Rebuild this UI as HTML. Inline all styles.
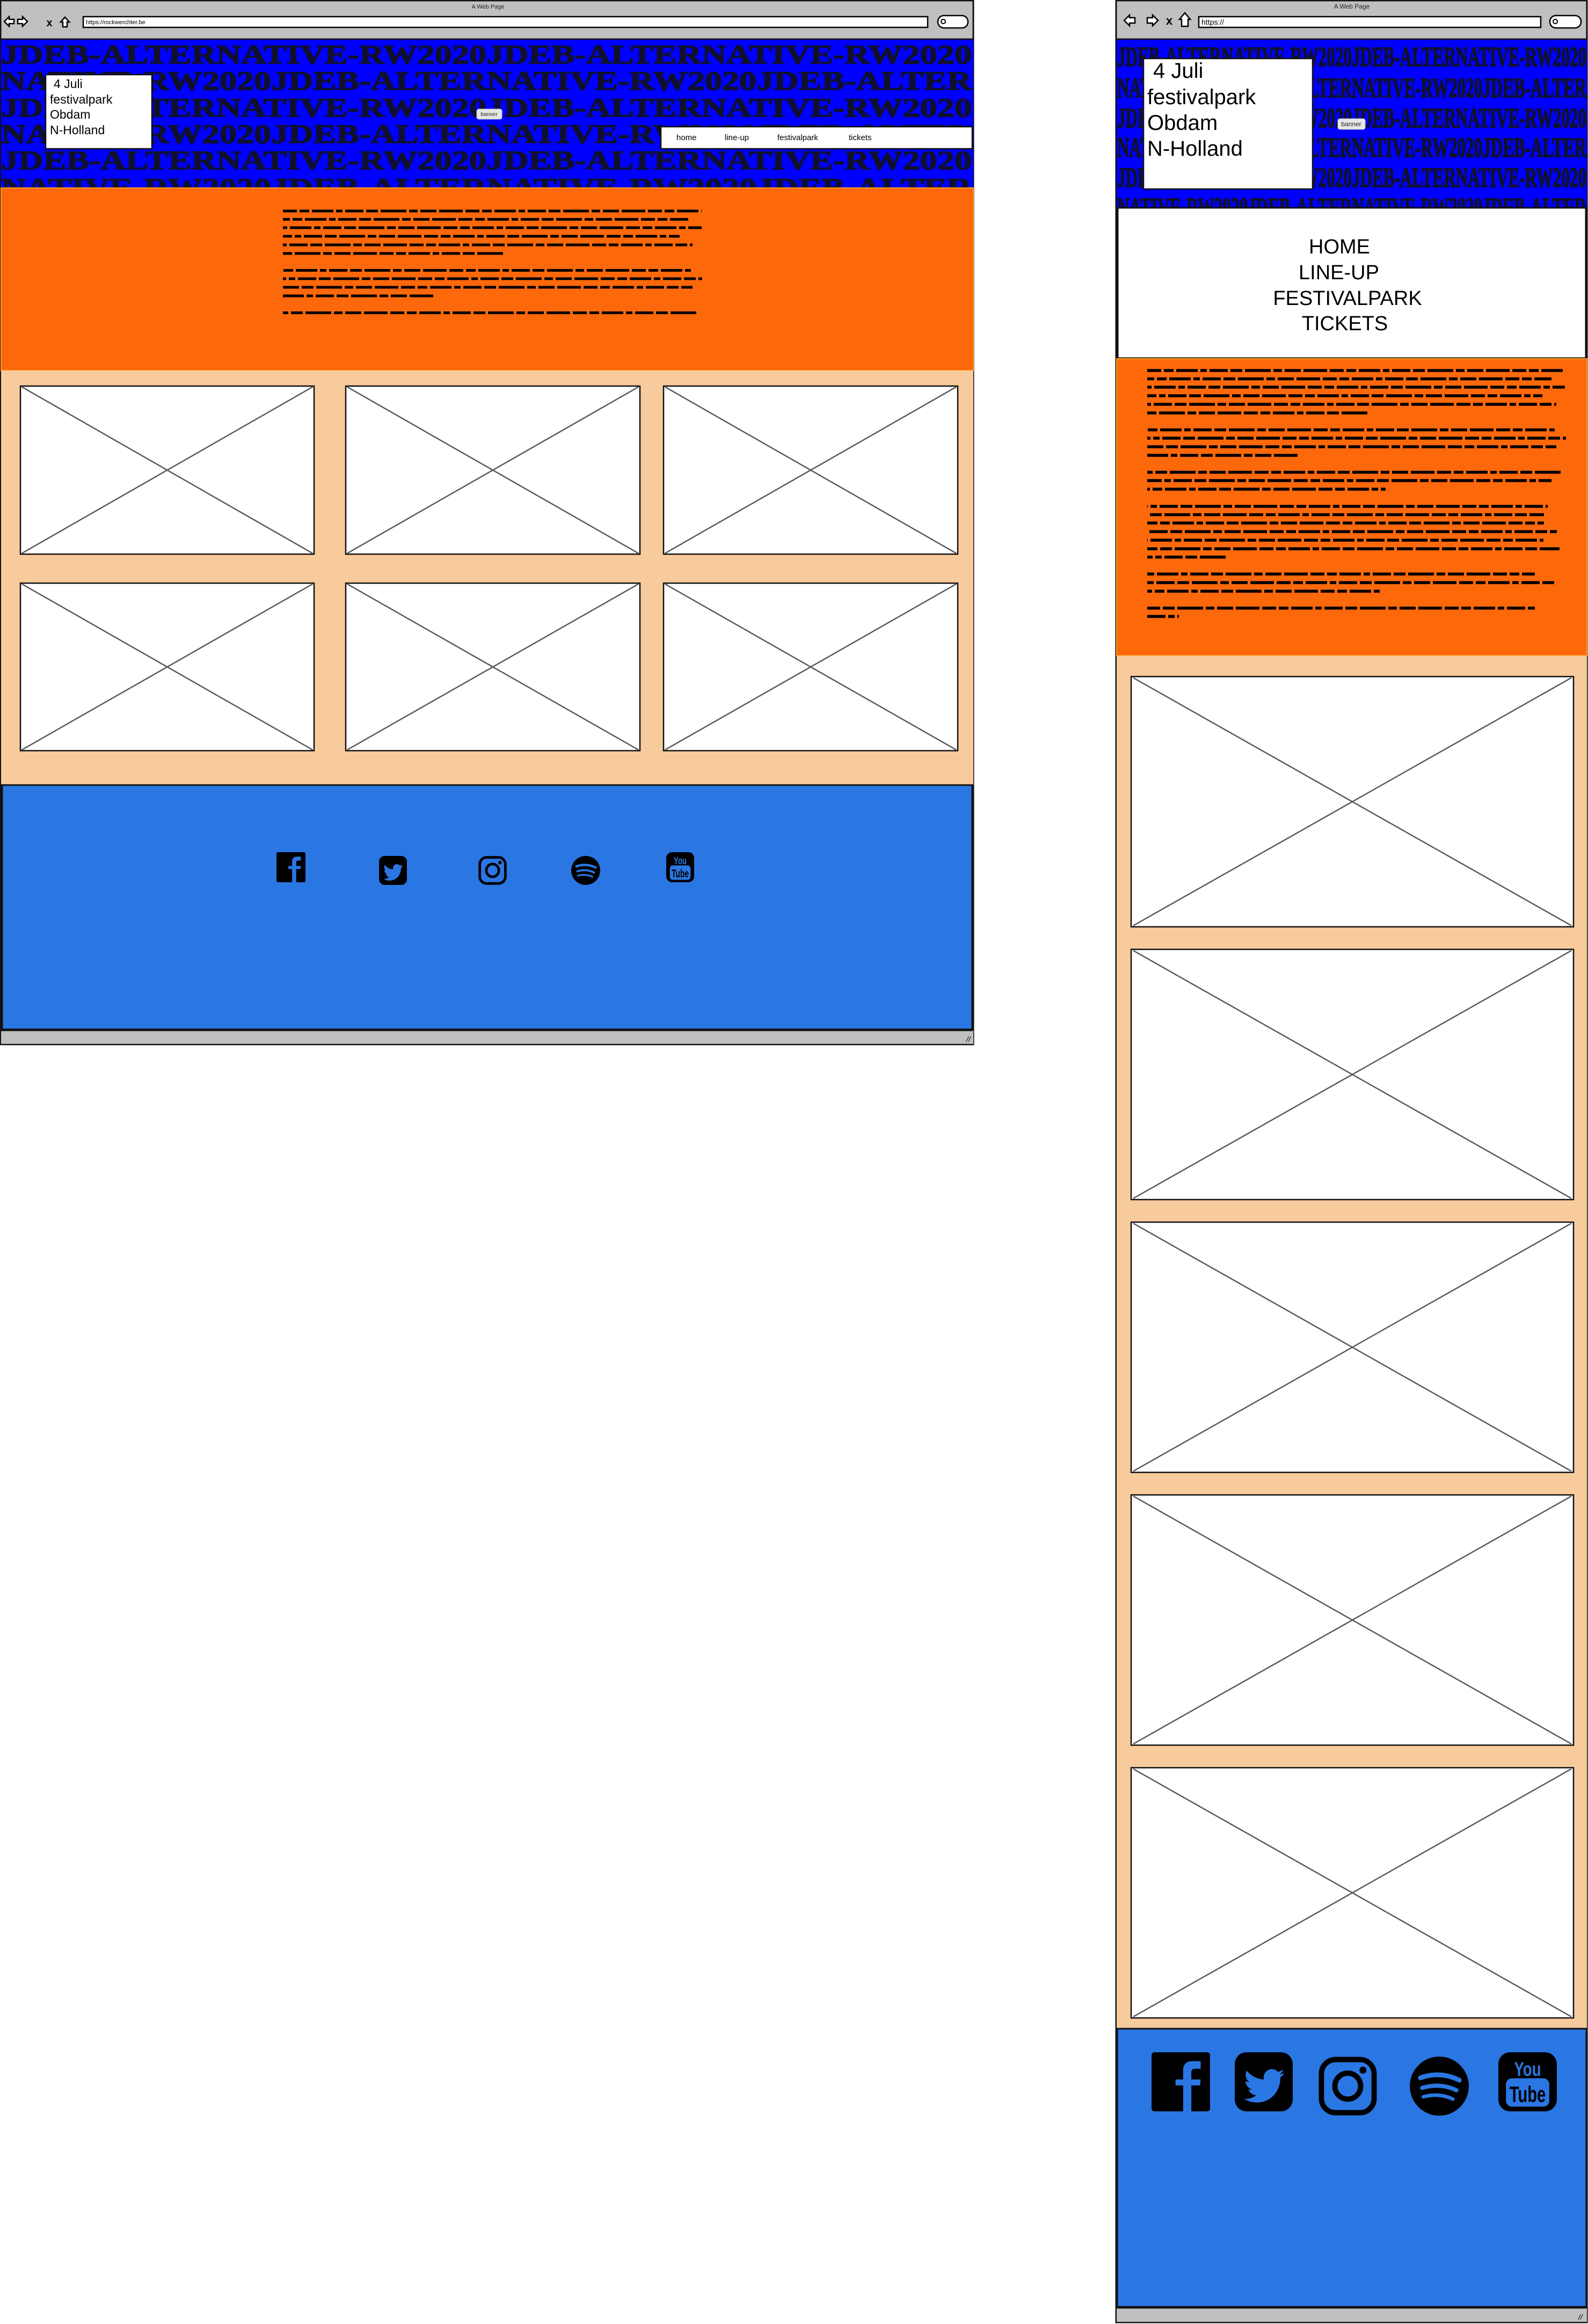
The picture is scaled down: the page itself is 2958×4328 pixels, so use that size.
<!DOCTYPE html>
<html><head><meta charset="utf-8"><style>
html,body{margin:0;padding:0;background:#fff;}
svg{display:block}
</style></head><body>
<svg width="2958" height="4328" viewBox="0 0 2958 4328" xmlns="http://www.w3.org/2000/svg">
<defs>
<clipPath id="clL"><rect x="2" y="74" width="1811" height="276"/></clipPath>
<clipPath id="clR"><rect x="2080" y="74" width="876" height="312"/></clipPath>
<symbol id="fb" viewBox="0 0 100 100" preserveAspectRatio="none">
<rect x="0" y="0" width="100" height="100" rx="5" fill="#000"/>
<path d="M54 100 V56 H41 V46 H54 V30 C54 20 60 15 70 15 H84 V28 H74 C70 28 68 30 68 34 V46 H84 L83 56 H68 V100 Z" fill="#2a77e3"/>
</symbol>
<symbol id="tw" viewBox="0 0 100 100" preserveAspectRatio="none">
<rect x="0" y="0" width="100" height="100" rx="20" fill="#000"/>
<g transform="translate(16,22) scale(2.9)"><path fill="#2a77e3" d="M23.954 4.569c-.885.389-1.83.654-2.825.775 1.014-.611 1.794-1.574 2.163-2.723-.951.555-2.005.959-3.127 1.184-.896-.959-2.173-1.559-3.591-1.559-2.717 0-4.92 2.203-4.92 4.917 0 .39.045.765.127 1.124C7.691 8.094 4.066 6.13 1.64 3.161c-.427.722-.666 1.561-.666 2.475 0 1.710.870 3.213 2.188 4.096-.807-.026-1.566-.248-2.228-.616v.061c0 2.385 1.693 4.374 3.946 4.827-.413.111-.849.171-1.296.171-.314 0-.615-.03-.916-.086.631 1.953 2.445 3.377 4.604 3.417-1.68 1.319-3.809 2.105-6.102 2.105-.39 0-.779-.023-1.17-.067 2.189 1.394 4.768 2.209 7.557 2.209 9.054 0 13.999-7.496 13.999-13.986 0-.209 0-.42-.015-.63.961-.689 1.8-1.56 2.46-2.548l-.047-.02z"/></g>
</symbol>
<symbol id="ig" viewBox="0 0 100 100" preserveAspectRatio="none">
<rect x="5" y="5" width="90" height="90" rx="24" fill="none" stroke="#000" stroke-width="9"/>
<ellipse cx="50" cy="50" rx="22" ry="22" fill="none" stroke="#000" stroke-width="9"/>
<circle cx="76" cy="23" r="6" fill="#000"/>
</symbol>
<symbol id="sp" viewBox="0 0 100 100" preserveAspectRatio="none">
<ellipse cx="50" cy="50" rx="50" ry="50" fill="#000"/>
<path d="M18 36 Q52 24 84 40" fill="none" stroke="#2a77e3" stroke-width="8" stroke-linecap="round"/>
<path d="M21 53 Q52 44 79 57" fill="none" stroke="#2a77e3" stroke-width="7" stroke-linecap="round"/>
<path d="M23 68 Q50 61 73 72" fill="none" stroke="#2a77e3" stroke-width="6" stroke-linecap="round"/>
</symbol>
<symbol id="yt" viewBox="0 0 100 100" preserveAspectRatio="none">
<rect x="0" y="0" width="100" height="100" rx="20" fill="#000"/>
<text x="50" y="40" text-anchor="middle" font-family="Liberation Sans, sans-serif" font-weight="bold" font-size="34" fill="#2a77e3" textLength="46" lengthAdjust="spacingAndGlyphs">You</text>
<rect x="13" y="44" width="74" height="48" rx="10" fill="#2a77e3"/>
<text x="50" y="84" text-anchor="middle" font-family="Liberation Sans, sans-serif" font-weight="bold" font-size="38" fill="#000" textLength="62" lengthAdjust="spacingAndGlyphs">Tube</text>
</symbol>
<symbol id="ph" viewBox="0 0 100 100" preserveAspectRatio="none">
<rect x="0" y="0" width="100" height="100" fill="#fff" stroke="none"/>
<line x1="0.5" y1="0.5" x2="99.5" y2="99.5" stroke="#5a5a5a" stroke-width="2.5" vector-effect="non-scaling-stroke"/>
<line x1="99.5" y1="0.5" x2="0.5" y2="99.5" stroke="#5a5a5a" stroke-width="2.5" vector-effect="non-scaling-stroke"/>
</symbol>
</defs>

<!-- ================= LEFT MOCKUP ================= -->
<rect x="1" y="1" width="1812" height="1944" fill="#c0c0c0" stroke="#111" stroke-width="3"/>
<text x="909" y="16" text-anchor="middle" font-family="Liberation Sans, sans-serif" font-size="11" fill="#222">A Web Page</text>
<path d="M8 40 L17 31 L17 36 L26 36 L26 44 L17 44 L17 49 Z" fill="#fff" stroke="#000" stroke-width="2.5"/>
<path d="M51 40 L42 31 L42 36 L33 36 L33 44 L42 44 L42 49 Z" fill="#fff" stroke="#000" stroke-width="2.5"/>
<text x="92" y="49" text-anchor="middle" font-family="Liberation Sans, sans-serif" font-weight="bold" font-size="20">x</text>
<path d="M121 32 L113 41 L117 41 L117 50 L125 50 L125 41 L129 41 Z" fill="#fff" stroke="#000" stroke-width="2.5"/>
<rect x="155" y="31" width="1573" height="20" fill="#fff" stroke="#000" stroke-width="2.5"/>
<text x="160" y="45" font-family="Liberation Sans, sans-serif" font-size="11" fill="#000">https://rockwerchter.be</text>
<rect x="1747" y="29" width="56" height="23" rx="11" fill="#fff" stroke="#000" stroke-width="2.5"/>
<circle cx="1757" cy="40" r="4" fill="none" stroke="#000" stroke-width="2"/>
<line x1="2" y1="73" x2="1812" y2="73" stroke="#111" stroke-width="3"/>

<rect x="2" y="74" width="1811" height="276" fill="#0000ff"/>
<g clip-path="url(#clL)" font-family="Liberation Serif, serif" font-weight="bold" font-size="50" fill="#10102e" stroke="#10102e" stroke-width="1.5">
<text x="2" y="118" textLength="1808" lengthAdjust="spacingAndGlyphs">JDEB-ALTERNATIVE-RW2020JDEB-ALTERNATIVE-RW2020</text>
<text x="2" y="167" textLength="1808" lengthAdjust="spacingAndGlyphs">NATIVE-RW2020JDEB-ALTERNATIVE-RW2020JDEB-ALTER</text>
<text x="2" y="217" textLength="1808" lengthAdjust="spacingAndGlyphs">JDEB-ALTERNATIVE-RW2020JDEB-ALTERNATIVE-RW2020</text>
<text x="2" y="266" textLength="1808" lengthAdjust="spacingAndGlyphs">NATIVE-RW2020JDEB-ALTERNATIVE-RW2020JDEB-ALTER</text>
<text x="2" y="315" textLength="1808" lengthAdjust="spacingAndGlyphs">JDEB-ALTERNATIVE-RW2020JDEB-ALTERNATIVE-RW2020</text>
<text x="2" y="366" textLength="1808" lengthAdjust="spacingAndGlyphs">NATIVE-RW2020JDEB-ALTERNATIVE-RW2020JDEB-ALTER</text>
</g>
<rect x="85" y="139" width="198" height="138" fill="#fff" stroke="#111" stroke-width="2.5"/>
<g font-family="Liberation Sans, sans-serif" font-size="23" fill="#000">
<text x="100" y="164">4 Juli</text>
<text x="93" y="193">festivalpark</text>
<text x="93" y="221">Obdam</text>
<text x="93" y="250">N-Holland</text>
</g>
<rect x="888" y="203" width="47" height="19" rx="4" fill="#e6e6e6" stroke="#bbb" stroke-width="1"/>
<text x="911" y="216" text-anchor="middle" font-family="Liberation Sans, sans-serif" font-size="10" fill="#222">banner</text>
<rect x="1231" y="236" width="580" height="41" fill="#fff" stroke="#111" stroke-width="2.5"/>
<g font-family="Liberation Sans, sans-serif" font-size="15" fill="#000">
<text x="1260" y="261">home</text>
<text x="1350" y="261">line-up</text>
<text x="1448" y="261">festivalpark</text>
<text x="1581" y="261">tickets</text>
</g>

<rect x="2" y="350" width="1811" height="340" fill="#fd680b" stroke="#ff9a1a" stroke-width="2"/>
<g stroke="#000" stroke-width="5" stroke-dasharray="26 5 18 5 40 5 12 5 34 5 22 5 48 5 16 5 30 5 44 5">
<line x1="527" y1="393" x2="1307" y2="393"/>
<line x1="527" y1="408.5" x2="1282" y2="408.5" stroke-dashoffset="13"/>
<line x1="527" y1="424" x2="1307" y2="424" stroke-dashoffset="41"/>
<line x1="527" y1="440" x2="1266" y2="440" stroke-dashoffset="77"/>
<line x1="527" y1="456" x2="1290" y2="456" stroke-dashoffset="104"/>
<line x1="527" y1="472" x2="941" y2="472" stroke-dashoffset="160"/>
<line x1="527" y1="503.5" x2="1287" y2="503.5" stroke-dashoffset="30"/>
<line x1="527" y1="519" x2="1308" y2="519" stroke-dashoffset="88"/>
<line x1="527" y1="535" x2="1290" y2="535" stroke-dashoffset="120"/>
<line x1="527" y1="551" x2="810" y2="551" stroke-dashoffset="55"/>
<line x1="527" y1="582.5" x2="1299" y2="582.5" stroke-dashoffset="140"/>
</g>

<rect x="2" y="690" width="1811" height="771" fill="#f8cb9c"/>
<use href="#ph" x="38" y="719" width="547" height="313"/>
<use href="#ph" x="644" y="719" width="548" height="313"/>
<use href="#ph" x="1236" y="719" width="548" height="313"/>
<use href="#ph" x="38" y="1086" width="547" height="312"/>
<use href="#ph" x="644" y="1086" width="548" height="312"/>
<use href="#ph" x="1236" y="1086" width="548" height="312"/>
<g fill="none" stroke="#111" stroke-width="2.5">
<rect x="38" y="719" width="547" height="313"/><rect x="644" y="719" width="548" height="313"/><rect x="1236" y="719" width="548" height="313"/>
<rect x="38" y="1086" width="547" height="312"/><rect x="644" y="1086" width="548" height="312"/><rect x="1236" y="1086" width="548" height="312"/>
</g>

<rect x="4" y="1462" width="1807" height="455" fill="#2a77e3" stroke="#111" stroke-width="3"/>
<use href="#fb" x="515" y="1587" width="54" height="56"/>
<use href="#tw" x="706" y="1594" width="52" height="54"/>
<use href="#ig" x="891" y="1594" width="53" height="54"/>
<use href="#sp" x="1064" y="1594" width="54" height="54"/>
<use href="#yt" x="1241" y="1587" width="52" height="56"/>
<rect x="2" y="1919" width="1811" height="25" fill="#c0c0c0"/>
<line x1="2" y1="1919" x2="1812" y2="1919" stroke="#111" stroke-width="2.5"/>
<text x="1800" y="1940" font-family="Liberation Sans, sans-serif" font-size="14" font-style="italic" fill="#000">//</text>

<!-- ================= RIGHT MOCKUP ================= -->
<rect x="2079" y="1" width="877" height="4324" fill="#c0c0c0" stroke="#111" stroke-width="3"/>
<text x="2518" y="16" text-anchor="middle" font-family="Liberation Sans, sans-serif" font-size="12" fill="#222">A Web Page</text>
<path d="M2094 38 L2104 28 L2104 33 L2114 33 L2114 43 L2104 43 L2104 48 Z" fill="#fff" stroke="#000" stroke-width="2.5"/>
<path d="M2157 38 L2147 28 L2147 33 L2137 33 L2137 43 L2147 43 L2147 48 Z" fill="#fff" stroke="#000" stroke-width="2.5"/>
<text x="2178" y="46" text-anchor="middle" font-family="Liberation Sans, sans-serif" font-weight="bold" font-size="22">x</text>
<path d="M2207 24 L2197 36 L2201 36 L2201 49 L2213 49 L2213 36 L2217 36 Z" fill="#fff" stroke="#000" stroke-width="2.5"/>
<rect x="2233" y="31" width="637" height="20" fill="#fff" stroke="#000" stroke-width="2.5"/>
<text x="2238" y="46" font-family="Liberation Sans, sans-serif" font-size="14" fill="#000">https://</text>
<rect x="2887" y="29" width="58" height="23" rx="11" fill="#fff" stroke="#000" stroke-width="2.5"/>
<circle cx="2897" cy="40" r="4" fill="none" stroke="#000" stroke-width="2"/>
<line x1="2080" y1="73" x2="2956" y2="73" stroke="#111" stroke-width="3"/>

<rect x="2080" y="74" width="876" height="312" fill="#0000ff"/>
<g clip-path="url(#clR)" font-family="Liberation Serif, serif" font-weight="bold" font-size="52" fill="#10102e" stroke="#10102e" stroke-width="2">
<text x="2081" y="123" textLength="874" lengthAdjust="spacingAndGlyphs">JDEB-ALTERNATIVE-RW2020JDEB-ALTERNATIVE-RW2020</text>
<text x="2081" y="181" textLength="874" lengthAdjust="spacingAndGlyphs">NATIVE-RW2020JDEB-ALTERNATIVE-RW2020JDEB-ALTER</text>
<text x="2081" y="237" textLength="874" lengthAdjust="spacingAndGlyphs">JDEB-ALTERNATIVE-RW2020JDEB-ALTERNATIVE-RW2020</text>
<text x="2081" y="292" textLength="874" lengthAdjust="spacingAndGlyphs">NATIVE-RW2020JDEB-ALTERNATIVE-RW2020JDEB-ALTER</text>
<text x="2081" y="348" textLength="874" lengthAdjust="spacingAndGlyphs">JDEB-ALTERNATIVE-RW2020JDEB-ALTERNATIVE-RW2020</text>
<text x="2081" y="404" textLength="874" lengthAdjust="spacingAndGlyphs">NATIVE-RW2020JDEB-ALTERNATIVE-RW2020JDEB-ALTER</text>
</g>
<rect x="2130" y="109" width="315" height="243" fill="#fff" stroke="#111" stroke-width="2.5"/>
<g font-family="Liberation Sans, sans-serif" font-size="40" fill="#000">
<text x="2148" y="145">4 Juli</text>
<text x="2137" y="194">festivalpark</text>
<text x="2137" y="242">Obdam</text>
<text x="2137" y="290">N-Holland</text>
</g>
<rect x="2492" y="221" width="51" height="20" rx="4" fill="#e6e6e6" stroke="#bbb" stroke-width="1"/>
<text x="2517" y="235" text-anchor="middle" font-family="Liberation Sans, sans-serif" font-size="12" fill="#222">banner</text>

<rect x="2082" y="387" width="872" height="280" fill="#fff" stroke="#111" stroke-width="3"/>
<g font-family="Liberation Sans, sans-serif" font-size="38" fill="#000" text-anchor="middle">
<text x="2495" y="472">HOME</text>
<text x="2494" y="520">LINE-UP</text>
<text x="2510" y="568">FESTIVALPARK</text>
<text x="2505" y="615">TICKETS</text>
</g>

<rect x="2080" y="668" width="876" height="553" fill="#fd680b" stroke="#ff9a1a" stroke-width="2"/>
<g stroke="#000" stroke-width="5.5" stroke-dasharray="26 5 18 5 40 5 12 5 34 5 22 5 48 5 16 5 30 5 44 5">
<line x1="2137" y1="690" x2="2915" y2="690"/>
<line x1="2137" y1="705.5" x2="2890" y2="705.5" stroke-dashoffset="13"/>
<line x1="2137" y1="721" x2="2915" y2="721" stroke-dashoffset="41"/>
<line x1="2137" y1="737" x2="2873" y2="737" stroke-dashoffset="77"/>
<line x1="2137" y1="753" x2="2899" y2="753" stroke-dashoffset="104"/>
<line x1="2137" y1="769" x2="2550" y2="769" stroke-dashoffset="160"/>
<line x1="2137" y1="800.5" x2="2896" y2="800.5" stroke-dashoffset="30"/>
<line x1="2137" y1="816" x2="2917" y2="816" stroke-dashoffset="88"/>
<line x1="2137" y1="832" x2="2899" y2="832" stroke-dashoffset="120"/>
<line x1="2137" y1="848" x2="2418" y2="848" stroke-dashoffset="55"/>
<line x1="2137" y1="879.5" x2="2907" y2="879.5" stroke-dashoffset="140"/>
<line x1="2137" y1="895" x2="2890" y2="895" stroke-dashoffset="67"/>
<line x1="2137" y1="911" x2="2581" y2="911" stroke-dashoffset="21"/>
<line x1="2137" y1="943" x2="2883" y2="943" stroke-dashoffset="93"/>
<line x1="2137" y1="958.5" x2="2876" y2="958.5" stroke-dashoffset="150"/>
<line x1="2137" y1="974" x2="2876" y2="974" stroke-dashoffset="7"/>
<line x1="2137" y1="990" x2="2900" y2="990" stroke-dashoffset="112"/>
<line x1="2137" y1="1006" x2="2875" y2="1006" stroke-dashoffset="48"/>
<line x1="2137" y1="1022" x2="2905" y2="1022" stroke-dashoffset="131"/>
<line x1="2137" y1="1037.5" x2="2286" y2="1037.5" stroke-dashoffset="84"/>
<line x1="2137" y1="1069" x2="2859" y2="1069" stroke-dashoffset="36"/>
<line x1="2137" y1="1085" x2="2899" y2="1085" stroke-dashoffset="99"/>
<line x1="2137" y1="1101" x2="2570" y2="1101" stroke-dashoffset="17"/>
<line x1="2137" y1="1132.5" x2="2859" y2="1132.5" stroke-dashoffset="126"/>
<line x1="2137" y1="1148" x2="2196" y2="1148" stroke-dashoffset="60"/>
</g>

<rect x="2080" y="1221" width="876" height="2556" fill="#f8cb9c"/>
<use href="#ph" x="2107" y="1260" width="824" height="466"/>
<use href="#ph" x="2107" y="1768" width="824" height="466"/>
<use href="#ph" x="2107" y="2276" width="824" height="466"/>
<use href="#ph" x="2107" y="2784" width="824" height="466"/>
<use href="#ph" x="2107" y="3292" width="824" height="466"/>
<g fill="none" stroke="#111" stroke-width="2.5">
<rect x="2107" y="1260" width="824" height="466"/>
<rect x="2107" y="1768" width="824" height="466"/>
<rect x="2107" y="2276" width="824" height="466"/>
<rect x="2107" y="2784" width="824" height="466"/>
<rect x="2107" y="3292" width="824" height="466"/>
</g>

<rect x="2081" y="3778" width="874" height="518" fill="#2a77e3" stroke="#111" stroke-width="3"/>
<use href="#fb" x="2145" y="3822" width="109" height="110"/>
<use href="#tw" x="2300" y="3822" width="108" height="110"/>
<use href="#ig" x="2456" y="3830" width="109" height="110"/>
<use href="#sp" x="2626" y="3830" width="110" height="110"/>
<use href="#yt" x="2791" y="3822" width="109" height="110"/>
<rect x="2080" y="4298" width="876" height="26" fill="#c0c0c0"/>
<line x1="2080" y1="4298" x2="2956" y2="4298" stroke="#111" stroke-width="2.5"/>
<text x="2940" y="4320" font-family="Liberation Sans, sans-serif" font-size="14" font-style="italic" fill="#000">//</text>
</svg>
</body></html>
